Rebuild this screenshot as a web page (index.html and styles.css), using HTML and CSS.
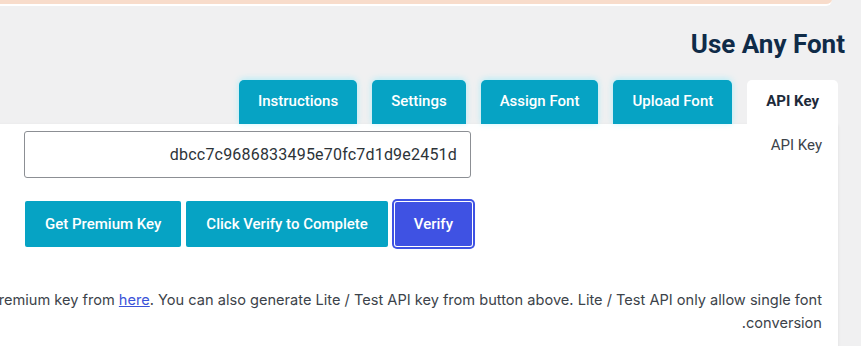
FILE: index.html
```html
<!DOCTYPE html>
<html lang="en">
<head>
<meta charset="utf-8">
<title>Use Any Font</title>
<link rel="stylesheet" href="styles.css">
</head>
<body class="page">
  <div class="notice-bar"></div>
  <h1 class="title">Use Any Font</h1>
  <div class="wrap">
    <nav class="tabs">
      <a class="tab">Instructions</a>
      <a class="tab">Settings</a>
      <a class="tab">Assign Font</a>
      <a class="tab">Upload Font</a>
      <a class="tab tab-active">API Key</a>
    </nav>
    <div class="panel">
      <div class="row">
        <div class="label">API Key</div>
        <div class="field">
          <input class="key-input" type="text" value="dbcc7c9686833495e70fc7d1d9e2451d">
          <div class="actions">
            <button class="btn">Get Premium Key</button>
            <button class="btn">Click Verify to Complete</button>
            <button class="btn btn-verify">Verify</button>
          </div>
        </div>
      </div>
      <p class="desc">You can get premium key from <a class="link" href="#">here</a>. You can also generate Lite / Test API key from button above. Lite / Test API only allow single font conversion.</p>
    </div>
  </div>
</body>
</html>
```
FILE: styles.css
```css
.page {
  margin: 0;
  direction: rtl;
  background: #f0f0f1;
  font-family: Roboto, "Liberation Sans", sans-serif;
  overflow: hidden;
}

.notice-bar {
  height: 4px;
  background: #f8dccb;
  border-bottom: 2px solid #ffffff;
  border-bottom-right-radius: 12px;
  margin-right: 29px;
  width: 1200px;
}

.title {
  margin: 23px 16px 20px 0;
  font-size: 26px;
  line-height: 31px;
  font-weight: 700;
  color: #0f2b48;
}

.wrap {
  margin-right: 23px;
  width: 1000px;
}

.tabs {
  direction: ltr;
  display: flex;
  justify-content: flex-end;
  gap: 15px;
}

.tab {
  height: 44px;
  padding: 0 19px 3px;
  box-sizing: border-box;
  display: flex;
  align-items: center;
  background: #06a3c4;
  color: #ffffff;
  font-size: 15px;
  font-weight: 500;
  border-radius: 5px 5px 0 0;
  box-shadow: 0 -1px 6px rgba(120, 235, 255, 0.55);
}

.tab-active {
  background: #ffffff;
  color: #1d2a3a;
  font-weight: 700;
  box-shadow: none;
}

.panel {
  background: #ffffff;
  padding: 7px 16px 20px;
  box-shadow: 0 1px 3px rgba(0, 0, 0, 0.08);
}

.row {
  display: grid;
  grid-template-columns: 351px 447px;
}

.label {
  padding-top: 4px;
  font-size: 15px;
  line-height: 20px;
  color: #3c434a;
}

.field {
  direction: ltr;
}

.key-input {
  display: block;
  width: 447px;
  height: 47px;
  box-sizing: border-box;
  border: 1px solid #8c8f94;
  border-radius: 3px;
  padding: 0 13px;
  text-align: right;
  font-family: Roboto, "Liberation Sans", sans-serif;
  font-size: 16px;
  letter-spacing: 0.2px;
  color: #2c3338;
  background: #ffffff;
}

.actions {
  display: flex;
  gap: 5px;
  margin-top: 23px;
  padding-left: 1px;
  white-space: nowrap;
}

.btn {
  flex: none;
  height: 46px;
  padding: 0 20px;
  border: none;
  border-radius: 2px;
  background: #06a3c4;
  color: #ffffff;
  font-family: Roboto, "Liberation Sans", sans-serif;
  font-size: 15px;
  font-weight: 500;
  white-space: nowrap;
}

.btn-verify {
  margin-left: 1px;
  background: #3f52e3;
  border-radius: 3px;
  box-shadow: inset 0 0 0 1px #ffffff, 0 0 0 2px #3f52e3;
}

.desc {
  margin: 42px 0 0;
  font-family: Inter, "Noto Sans", sans-serif;
  font-size: 14.6px;
  line-height: 23px;
  color: #3c434a;
}

.link {
  color: #3a53d8;
}
```
